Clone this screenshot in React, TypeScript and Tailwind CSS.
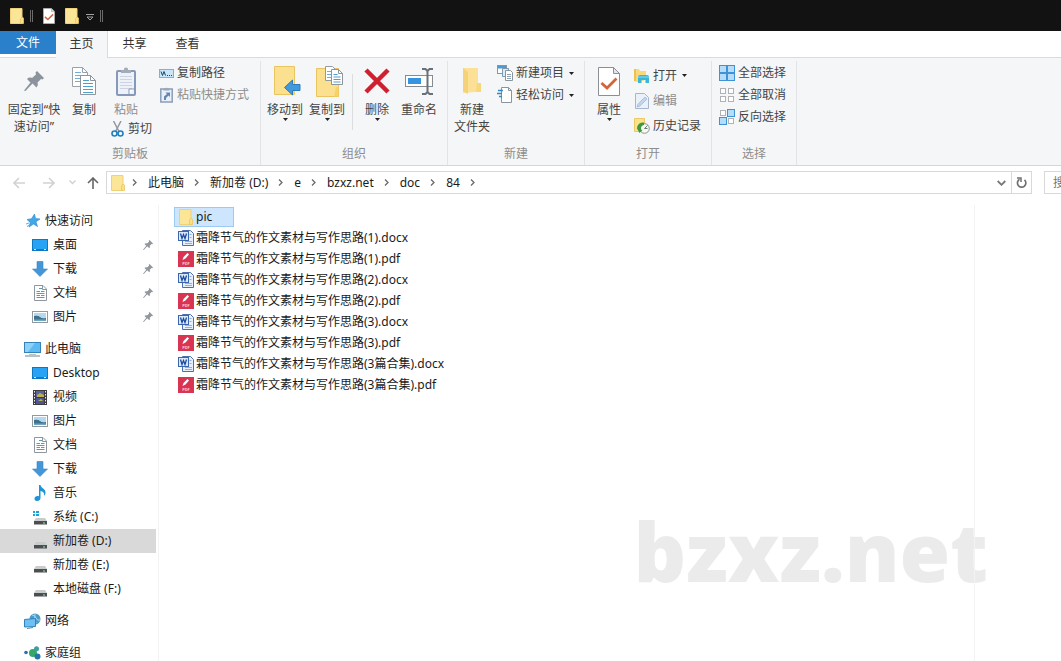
import type { ReactNode } from "react";
import clsx from "clsx";

/* ---------- icons ---------- */

function Folder({ className = "w-[14px] h-[16px]" }: { className?: string }) {
  return (
    <svg viewBox="0 0 14 16" className={clsx("shrink-0", className)} aria-hidden="true">
      <path d="M.5.5h11.500v15H.5z" fill="#fbe596" stroke="#f0d078" />
      <path d="M10.500 15.500V11l1.500-2 1.500 1v5.500z" fill="#fbdf86" stroke="#ecc75f" strokeWidth=".8" />
    </svg>
  );
}

function CheckDoc({ className }: { className?: string }) {
  return (
    <svg viewBox="0 0 22 29" className={clsx("shrink-0", className)} aria-hidden="true">
      <path d="M.5.5h15l6 6v22H.5z" fill="#fff" stroke="#8d8f96" />
      <path d="M15.500.5v6h6z" fill="#e1e4ea" stroke="#8d8f96" />
      <path d="M3.500 16l5.500 5 9.500-9.500" fill="none" stroke="#d2663a" strokeWidth="2.800" />
    </svg>
  );
}

function Pin({ className, color = "#8b949c" }: { className?: string; color?: string }) {
  return (
    <svg viewBox="0 0 20 20" className={clsx("shrink-0", className)} aria-hidden="true">
      <path
        d="M13 0l7 7-1.500 1.500-1.500-.5-3.500 3.500c.7 2 .3 3.500-1 5l-4-4L1.500 20 0 19.500l6.500-8-3.500-3.500c1.500-1.500 3.200-1.700 5-1L12 3.500 11.500 1.500z"
        fill={color}
      />
    </svg>
  );
}

function CopyIcon() {
  return (
    <svg viewBox="0 0 24 28" className="h-[28px] w-[24px]" aria-hidden="true">
      <path d="M.5.5h10l5 5v14H.5z" fill="#fff" stroke="#9aa1a8" />
      <path d="M10.500.5v5h5" fill="none" stroke="#9aa1a8" />
      <path d="M3 5.500h6M3 8.500h10M3 11.500h10M3 14.500h10" stroke="#6fb0d4" />
      <path d="M8.500 8.500h10l5 5v14h-15z" fill="#fff" stroke="#8c949c" />
      <path d="M18.500 8.500v5h5" fill="none" stroke="#8c949c" />
      <path d="M11 13.500h6M11 16.500h10M11 19.500h10M11 22.500h10M11 25.500h10" stroke="#4f9fcb" />
    </svg>
  );
}

function PasteIcon() {
  return (
    <svg viewBox="0 0 20 29" className="h-[29px] w-[20px]" aria-hidden="true">
      <rect x="1" y="4" width="18" height="24" rx="1" fill="#eef1f8" stroke="#8699bb" strokeWidth="2" />
      <path d="M5 6V3h3V1.500Q10-.5 12 1.500V3h3v3z" fill="#a4acba" />
      <path d="M4 9.500h12M4 12.500h12M4 15.500h12M4 18.500h12M4 21.500h12" stroke="#cbd3e4" />
      <path d="M13 27v-5h5" fill="#fff" stroke="#8699bb" />
    </svg>
  );
}

function Scissors() {
  return (
    <svg viewBox="0 0 13 16" className="h-[16px] w-[13px]" fill="none" aria-hidden="true">
      <path d="M2.500 0l5.500 10.500M10 0L4.500 10.500" stroke="#9298a0" strokeWidth="1.500" />
      <circle cx="3.500" cy="12.500" r="2.500" stroke="#1f7fbf" strokeWidth="1.600" />
      <circle cx="9.500" cy="12.500" r="2.500" stroke="#1f7fbf" strokeWidth="1.600" />
    </svg>
  );
}

function PathIcon() {
  return (
    <svg viewBox="0 0 15 9" className="h-[9px] w-[15px]" aria-hidden="true">
      <rect x=".5" y=".5" width="14" height="8" fill="#c9e6f9" stroke="#7db2d8" />
      <path d="M2 2.500l1.500 4 1.500-4 1.500 4" fill="none" stroke="#1d4466" />
      <path d="M8 6.500h1M10 6.500h1M12 6.500h1" stroke="#1d4466" />
    </svg>
  );
}

function PasteLinkIcon() {
  return (
    <svg viewBox="0 0 13 16" className="h-[16px] w-[13px]" aria-hidden="true">
      <rect x=".8" y="2" width="11.400" height="13" fill="#eaf0f8" stroke="#8c9db8" strokeWidth="1.500" />
      <path d="M3.500 3.500V1.500h2l1-1 1 1h2v2z" fill="#9aa6b8" />
      <path d="M4 13V9.500L7 7 5.500 5.500h4.500V10L8.500 8.500 6 11v2z" fill="#6385b5" />
    </svg>
  );
}

function MoveToIcon() {
  return (
    <svg viewBox="-5 0 32 30" className="h-[30px] w-[32px]" aria-hidden="true">
      <path d="M.5.5h20v28H.5z" fill="#fbe18f" stroke="#e9c560" />
      <path d="M18 18h2.500v10.500H16z" fill="#f7d267" />
      <path d="M10.500 21.500l8-7.500v4.500h7.500v6h-7.500V29z" fill="#4299de" stroke="#2c7cbd" />
    </svg>
  );
}

function CopyToIcon() {
  return (
    <svg viewBox="-5 0 32 31" className="h-[31px] w-[32px]" aria-hidden="true">
      <path d="M.5 2.500h22v28H.5z" fill="#fbe18f" stroke="#e9c560" />
      <path d="M20 21h2.500v9.500H18z" fill="#f7d267" />
      <path d="M9.500.5h7l3 3v11h-10z" fill="#fff" stroke="#929aa2" />
      <path d="M11 5.500h5M11 8.500h5M11 11.500h5" stroke="#6fb0d4" />
      <path d="M15.500 3.500h7l4 4v11h-11z" fill="#fff" stroke="#8c949c" />
      <path d="M22.500 3.500v4h4" fill="none" stroke="#8c949c" />
      <path d="M17.500 8.500h4M17.500 11h7M17.500 13.500h7M17.500 16h7" stroke="#4f9fcb" />
    </svg>
  );
}

function DeleteIcon() {
  return (
    <svg viewBox="0 0 26 26" className="h-[26px] w-[26px]" aria-hidden="true">
      <path d="M2 2l22 22M24 2L2 24" stroke="#cf2030" strokeWidth="4.500" />
    </svg>
  );
}

function RenameIcon() {
  return (
    <svg viewBox="0 0 28 27" className="h-[27px] w-[28px]" fill="none" aria-hidden="true">
      <rect x=".5" y="7.500" width="27" height="11" fill="#fff" stroke="#858b92" />
      <rect x="3" y="10" width="13" height="6" fill="#3693e0" />
      <path d="M17 1h3.500L22.500 3l2-2H28M22.500 3v21M17 26h3.500l2-2 2 2H28" stroke="#6a7077" strokeWidth="2" />
    </svg>
  );
}

function NewFolderIcon() {
  return (
    <svg viewBox="0 0 20 28" className="h-[28px] w-[20px]" aria-hidden="true">
      <path d="M1 1h15v15h3v9h-6L1 26z" fill="#fbe096" />
      <path d="M1 1l5 4v22l-5-3z" fill="#f5d27a" />
      <path d="M15 16h4v9h-5z" fill="#f7d67c" />
    </svg>
  );
}

function NewItemIcon() {
  return (
    <svg viewBox="0 0 16 16" className="h-[16px] w-[16px]" aria-hidden="true">
      <rect x=".5" y=".5" width="9" height="8" fill="#fff" stroke="#8b949d" />
      <path d="M1 1h8v2.500H1z" fill="#4a9bd4" />
      <path d="M5.500 3.500h6v8h-6z" fill="#d8ecfa" stroke="#7f99ad" />
      <path d="M8.500 5.500h5l2 2v8h-7z" fill="#fff" stroke="#8b949d" />
      <path d="M10 9.500h4M10 11.500h4M10 13.500h4" stroke="#8fa4b5" />
    </svg>
  );
}

function EasyAccessIcon() {
  return (
    <svg viewBox="0 0 16 16" className="h-[16px] w-[16px]" aria-hidden="true">
      <path d="M4.500.5h7l3 3v12h-10z" fill="#fff" stroke="#8b949d" />
      <path d="M11.500.5v3h3" fill="none" stroke="#8b949d" />
      <path d="M1 3.500h5M0 6.500h5M2 9.500h3" stroke="#3489c4" strokeWidth="1.400" />
    </svg>
  );
}

function OpenIcon() {
  return (
    <svg viewBox="0 0 16 16" className="h-[16px] w-[16px]" aria-hidden="true">
      <path d="M0 1h5l1 2h6v8l-3 2-6 1-3-1z" fill="#fbd978" />
      <path d="M0 1h2v12H0z" fill="#efbf52" />
      <path d="M4 8.500Q4 7 6 7h7q2 0 2 1.500V15h-3.500v-3h-4v3H4z" fill="#3bb5d8" />
      <path d="M4 9h11" stroke="#8bdcef" />
    </svg>
  );
}

function EditIcon() {
  return (
    <svg viewBox="0 0 14 16" className="h-[16px] w-[14px]" aria-hidden="true">
      <path d="M.5.5h9l4 4v11H.5z" fill="#eaf1fb" stroke="#a7b6cd" />
      <path d="M2 14l1-3 7-7 2 2-7 7z" fill="#c3d5ee" stroke="#9fb4d2" strokeWidth=".7" />
    </svg>
  );
}

function HistoryIcon() {
  return (
    <svg viewBox="0 0 16 16" className="h-[16px] w-[16px]" aria-hidden="true">
      <path d="M.5.5h10v13H.5z" fill="#fbe28c" stroke="#ecc964" />
      <circle cx="10.500" cy="10.500" r="4.800" fill="#f5f8f5" stroke="#8a938a" />
      <path d="M10.500 10.500l3-3M10.500 10.500h3" stroke="#6c7a6c" fill="none" />
      <path d="M3 10.500a6 6 0 0 1 7-6v2.500a4 4 0 0 0-3 4.500l1.500.5-3 3z" fill="#3f9a3d" />
    </svg>
  );
}

function SelectIcon({ filled }: { filled: boolean[] }) {
  return (
    <svg viewBox="0 0 16 16" className="h-[16px] w-[16px]" aria-hidden="true">
      {filled.map((on, i) => {
        const size = on ? 7 : 5;
        const x = (i % 2) * 8 + (on ? 0.5 : 1.5);
        const y = Math.floor(i / 2) * 8 + (on ? 0.5 : 1.5);
        return (
          <rect key={i} x={x} y={y} width={size} height={size} fill={on ? "#b5dcf8" : "#fff"} stroke={on ? "#3d93d6" : "#b0b3b6"} />
        );
      })}
    </svg>
  );
}

function TinyArrow({ className }: { className?: string }) {
  return (
    <svg viewBox="0 0 5 3" className={clsx("h-[3px] w-[5px] shrink-0", className)} aria-hidden="true">
      <path d="M0 0h5L2.500 3z" fill="#222" />
    </svg>
  );
}

function Star() {
  return (
    <svg viewBox="0 0 14 14" className="h-[14px] w-[14px]" aria-hidden="true">
      <path d="M8.500 0l1 4.500L14 5l-4 2.700 1.500 4.800-4-2.500L3 13l1.200-4.500L1 5.500l4.500-.8z" fill="#41a8e8" stroke="#2a86c6" strokeWidth=".6" />
      <path d="M0 10l3-1M1 12.500l2.500-1.500" stroke="#58b0e8" />
    </svg>
  );
}

function Desktop() {
  return (
    <svg viewBox="0 0 16 12" className="h-[12px] w-[16px]" aria-hidden="true">
      <rect x=".5" y=".5" width="15" height="11" fill="#27a3f5" stroke="#1377bd" />
      <path d="M1 10.500h14" stroke="#1878bb" />
      <path d="M2 10.500h2M12 10.500h2" stroke="#d6efff" />
    </svg>
  );
}

function Download() {
  return (
    <svg viewBox="0 0 16 16" className="h-[16px] w-[16px]" aria-hidden="true">
      <path d="M5 .5h6V8h4.500L8 15.500.5 8H5z" fill="#4596d8" stroke="#3a84c2" strokeWidth=".6" />
    </svg>
  );
}

function Doc() {
  return (
    <svg viewBox="0 0 13 16" className="h-[16px] w-[13px]" aria-hidden="true">
      <path d="M.5.5h8.500l3.500 3.500v11.500H.5z" fill="#fff" stroke="#8e979f" />
      <path d="M8.500.5v4h4" fill="none" stroke="#8e979f" />
      <path d="M5 3.500h3M2.500 6.500h3.500M7 6.500h3.500M2.500 8.500h8M2.500 10.500h3.500M7 10.500h3.500M2.500 12.500h8" stroke="#48a0c8" />
    </svg>
  );
}

function Picture() {
  return (
    <svg viewBox="0 0 16 12" className="h-[12px] w-[16px]" aria-hidden="true">
      <rect x=".5" y=".5" width="15" height="11" fill="#fff" stroke="#919aa1" />
      <path d="M2 2h12v8H2z" fill="#b4d9ef" />
      <path d="M2 5q4-1 6 1t6 1v3H2z" fill="#41708a" />
      <path d="M2 8.500h12V10H2z" fill="#6ea6c4" />
    </svg>
  );
}

function Video() {
  return (
    <svg viewBox="0 0 14 15" className="h-[15px] w-[14px]" aria-hidden="true">
      <path d="M0 0h14v15H0z" fill="#3c3c40" />
      <path d="M1.500 1v13M12.500 1v13" stroke="#eee" strokeDasharray="1.500 1.500" />
      <path d="M3 1h8v6H3z" fill="#5664a8" />
      <path d="M3 8h8v6H3z" fill="#4a5793" />
      <path d="M4 5l3-2 4 2v2H4zM5 11l3-2 2 2z" fill="#c0b045" />
    </svg>
  );
}

function Music() {
  return (
    <svg viewBox="0 0 12 16" className="h-[16px] w-[12px]" aria-hidden="true">
      <path d="M5 0h1.500c.5 3 5 3.500 5 7.500 0 1.500-.6 2.500-1.500 3.500.7-3-1-4.500-3.500-5V13c0 1.700-1.500 3-3.500 3S.5 15 .5 13.500 2 11 3.500 11c.6 0 1 0 1.500.3z" fill="#1f95d6" />
    </svg>
  );
}

function Computer() {
  return (
    <svg viewBox="0 0 17 15" className="h-[15px] w-[17px]" aria-hidden="true">
      <rect x=".5" y=".5" width="16" height="10" fill="#5cbaf2" stroke="#3383b8" />
      <path d="M1 1h10L4 10H1z" fill="#8bd1f8" />
      <path d="M5 12.500h7" stroke="#b6c4ce" />
      <path d="M1 14h15" stroke="#6b8496" />
    </svg>
  );
}

function Drive({ system }: { system?: boolean }) {
  return (
    <svg viewBox="0 0 16 15" className="h-[15px] w-[16px]" aria-hidden="true">
      <path d="M4 8h9l2 3H2z" fill="#c9cbcd" />
      <path d="M2 11h13v3.500H2z" fill="#4b4f52" />
      <path d="M11 13h2" stroke="#9be49b" />
      {system && <path d="M1 1h2v2H1zM4 1h3v2H4zM1 4h2v2H1zM4 4h3v2H4z" fill="#1aa3d9" />}
    </svg>
  );
}

function Network() {
  return (
    <svg viewBox="0 0 17 16" className="h-[16px] w-[17px]" aria-hidden="true">
      <circle cx="11" cy="6" r="5.500" fill="#4b9bc9" />
      <path d="M8 2q3 0 4 3t4 2M11 1q-1 5 1 9" stroke="#a9d8ec" fill="none" />
      <path d="M.5 6.500l11-1v8l-11 .5z" fill="#6cc0f4" stroke="#3183ba" />
      <path d="M3 15.500l6-1" stroke="#64859c" />
    </svg>
  );
}

function HomeGroup() {
  return (
    <svg viewBox="0 0 17 14" className="h-[14px] w-[17px]" aria-hidden="true">
      <path d="M9 7l4-5M9 7l5 4" stroke="#6fb89a" strokeWidth="2" />
      <circle cx="2" cy="6.500" r="1.800" fill="#2d6ea8" />
      <circle cx="9" cy="7" r="4" fill="#35a866" />
      <circle cx="12.500" cy="2.700" r="2.500" fill="#3c9f9f" />
      <circle cx="13.500" cy="10.500" r="3" fill="#2974a7" />
    </svg>
  );
}

function Word() {
  return (
    <svg viewBox="0 0 16 16" className="h-[16px] w-[16px] shrink-0" aria-hidden="true">
      <path d="M4.500.5h8l3 3v12h-11z" fill="#e6effb" stroke="#4a6fae" />
      <path d="M11.500 4.500h2M11.500 7.500h2M7 11.500h7M7 13.500h7" stroke="#8fafdd" />
      <rect x=".5" y="1.500" width="10" height="9" fill="#dbe8fa" stroke="#3b66ad" />
      <path d="M2.500 3.500l1.500 5 1.500-4 1.500 4 1.500-5" fill="none" stroke="#1c4c9e" strokeWidth="1.300" />
    </svg>
  );
}

function Pdf() {
  return (
    <svg viewBox="0 0 16 16" className="h-[16px] w-[16px] shrink-0" aria-hidden="true">
      <path d="M0 0h16v16H0z" fill="#d93452" />
      <path d="M4.500 9l1-3 4-4L11 3.500l-3.500 4z" fill="#fff" />
      <text x="8" y="14" textAnchor="middle" fontSize="4" fontWeight="bold" fill="#ffc9d2">PDF</text>
    </svg>
  );
}

function Chevron({ className = "ml-[10px]" }: { className?: string }) {
  return (
    <svg viewBox="0 0 5 7" className={clsx("mr-[11px] h-[7px] w-[5px] shrink-0", className)} aria-hidden="true">
      <path d="M1 .5l3 3-3 3" fill="none" stroke="#6a6a6a" strokeWidth="1.300" />
    </svg>
  );
}

function Arrow({ className, color }: { className?: string; color: string }) {
  return (
    <svg viewBox="0 0 12 12" className={clsx("h-[12px] w-[12px]", className)} aria-hidden="true">
      <path d="M12 6H1M6 1L1 6l5 5" fill="none" stroke={color} strokeWidth="1.600" />
    </svg>
  );
}

function Down({ color }: { color: string }) {
  return (
    <svg viewBox="0 0 9 6" className="h-[6px] w-[9px]" aria-hidden="true">
      <path d="M.7 1l3.800 3.800L8.300 1" fill="none" stroke={color} strokeWidth="1.800" />
    </svg>
  );
}

/* ---------- ribbon ---------- */

type ButtonProps = { icon: ReactNode; children: ReactNode; menu?: boolean; disabled?: boolean };

function BigButton({ icon, children, menu, disabled, className = "w-[42px]" }: ButtonProps & { className?: string }) {
  return (
    <button
      disabled={disabled}
      className={clsx("mt-[2px] flex shrink-0 flex-col items-center leading-[17px] disabled:text-[#8d8d8d]", className)}
    >
      <span className="mb-[3px] flex h-[34px] items-center">{icon}</span>
      {children}
      {menu && <TinyArrow />}
    </button>
  );
}

function SmallButton({ icon, children, menu, disabled, className = "h-[22px]" }: ButtonProps & { className?: string }) {
  return (
    <button
      disabled={disabled}
      className={clsx("flex items-center whitespace-nowrap disabled:text-[#8d8d8d]", className)}
    >
      <span className="mr-[3px] flex w-[16px] shrink-0 justify-center">{icon}</span>
      {children}
      {menu && <TinyArrow className="ml-[5px]" />}
    </button>
  );
}

function Group({ label, className, children }: { label: string; className: string; children: ReactNode }) {
  return (
    <section aria-label={label} className={clsx("flex shrink-0 flex-col justify-between border-r border-[#e2e3e4]", className)}>
      <div className="flex items-start px-[3px] pt-px">{children}</div>
      <p className="pb-[3px] text-center leading-4 text-[#8d8d8d]">{label}</p>
    </section>
  );
}

/* ---------- data ---------- */

type Place = { name: string; icon: ReactNode; pinned?: boolean; active?: boolean };

const places: { name: string; icon: ReactNode; items: Place[] }[] = [
  {
    name: "快速访问",
    icon: <Star />,
    items: [
      { name: "桌面", icon: <Desktop />, pinned: true },
      { name: "下载", icon: <Download />, pinned: true },
      { name: "文档", icon: <Doc />, pinned: true },
      { name: "图片", icon: <Picture />, pinned: true },
    ],
  },
  {
    name: "此电脑",
    icon: <Computer />,
    items: [
      { name: "Desktop", icon: <Desktop /> },
      { name: "视频", icon: <Video /> },
      { name: "图片", icon: <Picture /> },
      { name: "文档", icon: <Doc /> },
      { name: "下载", icon: <Download /> },
      { name: "音乐", icon: <Music /> },
      { name: "系统 (C:)", icon: <Drive system /> },
      { name: "新加卷 (D:)", icon: <Drive />, active: true },
      { name: "新加卷 (E:)", icon: <Drive /> },
      { name: "本地磁盘 (F:)", icon: <Drive /> },
    ],
  },
  { name: "网络", icon: <Network />, items: [] },
  { name: "家庭组", icon: <HomeGroup />, items: [] },
];

const crumbs = ["此电脑", "新加卷 (D:)", "e", "bzxz.net", "doc", "84"];

const files = ["(1)", "(2)", "(3)", "(3篇合集)"].flatMap((n) => [
  `霜降节气的作文素材与写作思路${n}.docx`,
  `霜降节气的作文素材与写作思路${n}.pdf`,
]);

export default function App() {
  return (
    <div
      lang="zh-CN"
      className="flex h-screen flex-col overflow-hidden bg-white font-['Noto_Sans','Noto_Sans_CJK_SC',sans-serif] text-[12px] text-[#1a1a1a]"
    >
      {/* Title bar */}
      <header className="flex h-[31px] shrink-0 items-center bg-[#121212] pl-[10px]">
        <Folder />
        <span className="mx-[6px] h-[12px] w-[3px] border-x border-[#6a6a6a]" />
        <button aria-label="属性" className="ml-[4px]">
          <CheckDoc className="h-[16px] w-[12px]" />
        </button>
        <button aria-label="新建文件夹" className="ml-[10px]">
          <Folder />
        </button>
        <button aria-label="自定义快速访问工具栏" className="ml-[7px] pt-1">
          <svg viewBox="0 0 8 7" className="h-[7px] w-[8px]" aria-hidden="true">
            <path d="M0 .5h8M1 3l3 3 3-3z" fill="none" stroke="#a0a0a0" />
          </svg>
        </button>
        <span className="ml-[6px] h-[12px] w-[3px] border-x border-[#6a6a6a]" />
      </header>

      {/* Tabs */}
      <nav className="flex h-[27px] shrink-0 border-b border-[#dadbdc] leading-6">
        <button className="h-[23px] w-[56px] bg-[#2a80ca] text-white">文件</button>
        <button className="-mb-px w-[52px] border-r border-[#dadbdc] bg-[#f5f6f7] pb-px text-[#333]">主页</button>
        <button className="w-[53px] text-[#333]">共享</button>
        <button className="w-[53px] text-[#333]">查看</button>
      </nav>

      {/* Ribbon */}
      <div className="flex h-[108px] shrink-0 border-b border-[#d5d6d7] bg-[#f5f6f7] pt-[3px] text-[#444]">
        <Group label="剪贴板" className="w-[261px]">
          <BigButton className="w-[62px]" icon={<Pin className="h-[20px] w-[20px]" />}>
            <span>固定到“快</span>
            <span>速访问”</span>
          </BigButton>
          <BigButton className="w-[38px]" icon={<CopyIcon />}>复制</BigButton>
          <div className="mr-[6px] flex flex-col items-start">
            <BigButton className="w-[46px]" icon={<PasteIcon />} disabled>粘贴</BigButton>
            <SmallButton className="ml-[6px] h-[22px]" icon={<Scissors />}>剪切</SmallButton>
          </div>
          <div>
            <SmallButton icon={<PathIcon />}>复制路径</SmallButton>
            <SmallButton icon={<PasteLinkIcon />} disabled>粘贴快捷方式</SmallButton>
          </div>
        </Group>

        <Group label="组织" className="w-[187px]">
          <BigButton icon={<MoveToIcon />} menu>移动到</BigButton>
          <BigButton icon={<CopyToIcon />} menu>复制到</BigButton>
          <span className="ml-1 mr-[3px] mt-3 h-[56px] border-l border-[#dcdddf]" />
          <BigButton icon={<DeleteIcon />} menu>删除</BigButton>
          <BigButton icon={<RenameIcon />}>重命名</BigButton>
        </Group>

        <Group label="新建" className="w-[137px]">
          <BigButton icon={<NewFolderIcon />}>
            <span>新建</span>
            <span className="whitespace-nowrap">文件夹</span>
          </BigButton>
          <div className="ml-1">
            <SmallButton icon={<NewItemIcon />} menu>新建项目</SmallButton>
            <SmallButton icon={<EasyAccessIcon />} menu>轻松访问</SmallButton>
          </div>
        </Group>

        <Group label="打开" className="w-[127px]">
          <BigButton icon={<CheckDoc className="h-[29px] w-[22px]" />} menu>属性</BigButton>
          <div className="ml-1 mt-px">
            <SmallButton className="h-[25px]" icon={<OpenIcon />} menu>打开</SmallButton>
            <SmallButton className="h-[25px]" icon={<EditIcon />} disabled>编辑</SmallButton>
            <SmallButton className="h-[25px]" icon={<HistoryIcon />}>历史记录</SmallButton>
          </div>
        </Group>

        <Group label="选择" className="w-[85px]">
          <div className="ml-1">
            <SmallButton icon={<SelectIcon filled={[true, true, true, true]} />}>全部选择</SmallButton>
            <SmallButton icon={<SelectIcon filled={[false, false, false, false]} />}>全部取消</SmallButton>
            <SmallButton icon={<SelectIcon filled={[false, true, true, false]} />}>反向选择</SmallButton>
          </div>
        </Group>
      </div>

      {/* Address bar */}
      <div className="flex h-[33px] shrink-0 items-center pl-[13px]">
        <button aria-label="后退" disabled className="mr-[18px]"><Arrow color="#d2d2d2" /></button>
        <button aria-label="前进" disabled className="mr-[14px]"><Arrow color="#d2d2d2" className="rotate-180" /></button>
        <button aria-label="最近浏览的位置" className="mr-[11px]">
          <svg viewBox="0 0 7 5" className="h-[5px] w-[7px]" aria-hidden="true">
            <path d="M.5.5l3 3 3-3" fill="none" stroke="#cfcfcf" strokeWidth="1.300" />
          </svg>
        </button>
        <button aria-label="上移" className="mr-[7px]"><Arrow color="#666" className="rotate-90" /></button>
        <div className="flex h-[23px] min-w-0 flex-1 items-center border border-[#d9d9d9] pl-1">
          <Folder />
          <Chevron className="ml-[7px]" />
          {crumbs.map((crumb) => (
            <span key={crumb} className="flex items-center whitespace-nowrap">
              <button>{crumb}</button>
              <Chevron />
            </span>
          ))}
          <button aria-label="以前的位置" className="ml-auto mr-[5px]"><Down color="#777" /></button>
          <button aria-label="刷新" className="flex h-full w-[20px] items-center justify-center border-l border-[#d9d9d9]">
            <svg viewBox="0 0 11 11" className="h-[11px] w-[11px]" aria-hidden="true">
              <path d="M8.500 2.800A4.200 4.200 0 1 1 3.500 2.300" fill="none" stroke="#707070" strokeWidth="1.700" />
              <path d="M1 1h4v4" fill="none" stroke="#707070" strokeWidth="1.500" />
            </svg>
          </button>
        </div>
        <input
          aria-label="搜索"
          placeholder="搜索"
          className="ml-3 h-[23px] w-[17px] border border-r-0 border-[#d9d9d9] pl-2 placeholder:text-[#757575]"
        />
      </div>

      {/* Folders and files */}
      <main className="relative flex min-h-0 flex-1 pt-[6px]">
        <p className="pointer-events-none absolute bottom-[56px] right-[73px] font-['Open_Sans','Noto_Sans',sans-serif] text-[82px] font-extrabold leading-[110px] text-[#ebebeb]">
          bzxz.net
        </p>
        <nav className="w-[159px] shrink-0 border-r border-[#f3f3f3] pr-[2px] pt-1">
          {places.map((place) => (
            <div key={place.name} className="mb-2">
              <button className="flex h-6 w-full items-center pl-[24px]">
                <span className="mr-1 flex w-[17px] justify-center">{place.icon}</span>
                {place.name}
              </button>
              {place.items.map((item) => (
                <button
                  key={item.name}
                  className={clsx("flex h-6 w-full items-center pl-[32px]", item.active && "bg-[#d9d9d9]")}
                >
                  <span className="mr-[5px] flex w-[16px] justify-center">{item.icon}</span>
                  {item.name}
                  {item.pinned && <Pin className="ml-auto mr-[3px] h-[10px] w-[10px]" color="#8f969c" />}
                </button>
              ))}
            </div>
          ))}
        </nav>
        <ul className="relative min-w-0 flex-1 border-r border-[#f3f3f3] pl-[15px] pt-[2px]">
          <li>
            <button className="flex h-[20px] w-[60px] items-center border border-[#9bcbf2] bg-[#cde6fd] pl-1">
              <Folder className="mr-[3px] h-[16px] w-[14px]" />
              pic
            </button>
          </li>
          {files.map((file) => (
            <li key={file}>
              <button className="flex h-[21px] items-center gap-[2px] whitespace-nowrap pl-1">
                {file.endsWith(".pdf") ? <Pdf /> : <Word />}
                {file}
              </button>
            </li>
          ))}
        </ul>
        <aside aria-label="预览" className="w-[86px] shrink-0" />
      </main>
    </div>
  );
}
